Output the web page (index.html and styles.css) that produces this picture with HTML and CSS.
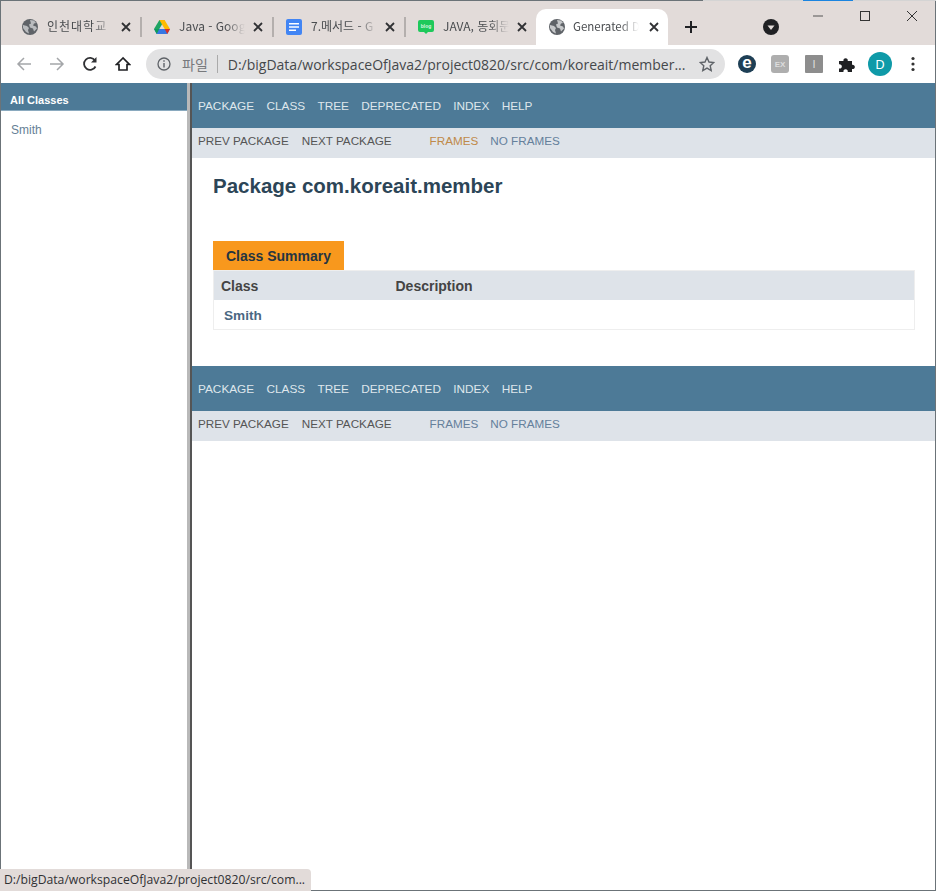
FILE: index.html
```html
<!DOCTYPE html>
<html lang="ko">
<head>
    <meta charset="UTF-8">
    <meta name="viewport" content="width=device-width, initial-scale=1.0">
    <title>Generated Documentation</title>
    <link rel="stylesheet" href="styles.css">
</head>
<body>
    <div class="window">
        <div class="titlebar">
            <span class="edge-light"></span>
            <span class="edge-blue"></span>
            <div class="tab">
                <svg class="favicon" viewBox="0 0 16 16"><circle cx="8" cy="8" r="8" fill="#5f6368"/><path d="M1 6l4 1 2 2-1 2 1 3.500-3-1.500-3-4zM8 1l4 .5 2 2.500-2 .5-1 2 3 1 1 2-3 3-1-3-3-1-1-3 2-1z" fill="#b9bbbe"/></svg>
                <span class="tab-title tab-title-ko">인천대학교</span>
                <svg class="tab-close" viewBox="0 0 10 10"><path d="M1 1l8 8M9 1l-8 8" stroke="#303134" stroke-width="1.800"/></svg>
            </div>
            <div class="tab">
                <svg class="favicon" viewBox="0 0 16 16"><path d="M5.400 1h5.200L5.300 10H0z" fill="#1fa463"/><path d="M10.600 1L16 10h-5.300L5.400 1z" fill="#ffba00"/><path d="M0 10l2.700 5h10.600l2.700-5z" fill="#3777e3"/><path d="M0 10h5.300l-2.600 5z" fill="#0f9d58"/><path d="M16 10h-5.300l2.600 5z" fill="#d93025"/></svg>
                <span class="tab-title">Java - Goog</span>
                <svg class="tab-close" viewBox="0 0 10 10"><path d="M1 1l8 8M9 1l-8 8" stroke="#303134" stroke-width="1.800"/></svg>
            </div>
            <div class="tab">
                <svg class="favicon" viewBox="0 0 16 16"><rect width="16" height="16" rx="2" fill="#4285f4"/><path d="M3 4h10v1.600H3zM3 7.200h10v1.600H3zM3 10.400h7V12H3z" fill="#fff"/></svg>
                <span class="tab-title">7.메서드 - G</span>
                <svg class="tab-close" viewBox="0 0 10 10"><path d="M1 1l8 8M9 1l-8 8" stroke="#303134" stroke-width="1.800"/></svg>
            </div>
            <div class="tab">
                <svg class="favicon" viewBox="0 0 16 16"><path d="M2 1h12a2 2 0 0 1 2 2v8a2 2 0 0 1-2 2h-4l-2 2-2-2H2a2 2 0 0 1-2-2V3a2 2 0 0 1 2-2z" fill="#1ec95b"/><text x="8" y="9" class="blog-label">blog</text></svg>
                <span class="tab-title">JAVA, 동회문</span>
                <svg class="tab-close" viewBox="0 0 10 10"><path d="M1 1l8 8M9 1l-8 8" stroke="#303134" stroke-width="1.800"/></svg>
            </div>
            <div class="tab tab-active">
                <svg class="favicon" viewBox="0 0 16 16"><circle cx="8" cy="8" r="8" fill="#5f6368"/><path d="M1 6l4 1 2 2-1 2 1 3.500-3-1.500-3-4zM8 1l4 .5 2 2.500-2 .5-1 2 3 1 1 2-3 3-1-3-3-1-1-3 2-1z" fill="#c6c8ca"/></svg>
                <span class="tab-title">Generated D</span>
                <svg class="tab-close" viewBox="0 0 10 10"><path d="M1 1l8 8M9 1l-8 8" stroke="#303134" stroke-width="1.800"/></svg>
            </div>
            <svg class="new-tab" viewBox="0 0 14 14"><path d="M7 1v12M1 7h12" stroke="#202124" stroke-width="2"/></svg>
            <svg class="tab-search" viewBox="0 0 16 16"><circle cx="8" cy="8" r="8" fill="#202124"/><path d="M4.500 6.500h7L8 11z" fill="#e2dbd9"/></svg>
            <div class="win-controls">
                <svg viewBox="0 0 12 12"><path d="M1 6h10" stroke="#555" stroke-width="1"/></svg>
                <svg viewBox="0 0 12 12"><rect x="1.500" y="1.500" width="9" height="9" fill="none" stroke="#333" stroke-width="1"/></svg>
                <svg viewBox="0 0 12 12"><path d="M1 1l10 10M11 1L1 11" stroke="#333" stroke-width="1"/></svg>
            </div>
        </div>

        <div class="toolbar">
            <svg class="tool-icon" viewBox="0 0 16 16"><path d="M15 8H2M8 2L2 8l6 6" fill="none" stroke="#a4a6a9" stroke-width="1.500"/></svg>
            <svg class="tool-icon" viewBox="0 0 16 16"><path d="M1 8h13M8 2l6 6-6 6" fill="none" stroke="#a4a6a9" stroke-width="1.500"/></svg>
            <svg class="tool-icon" viewBox="0 0 16 16"><path d="M13.500 10.500A6 6 0 1 1 13 4.500" fill="none" stroke="#303134" stroke-width="1.800"/><path d="M14.500 1v5.500H9z" fill="#303134"/></svg>
            <svg class="tool-icon" viewBox="0 0 16 16"><path d="M8 2L1.500 8.500H4V14h8V8.500h2.500z" fill="none" stroke="#202124" stroke-width="1.700"/></svg>
            <div class="omnibox">
                <svg class="info-icon" viewBox="0 0 14 14"><circle cx="7" cy="7" r="6" fill="none" stroke="#5f6368" stroke-width="1.300"/><path d="M7 6v4.500M7 3.300v1.500" stroke="#5f6368" stroke-width="1.400"/></svg>
                <span class="scheme">파일</span>
                <span class="omni-sep"></span>
                <span class="url">D:/bigData/workspaceOfJava2/project0820/src/com/koreait/member...</span>
                <svg class="star" viewBox="0 0 16 16"><path d="M8 1.500l2 4.500 4.800.5-3.600 3.200 1 4.800L8 12.100l-4.200 2.400 1-4.800L1.200 6.500 6 6z" fill="none" stroke="#5f6368" stroke-width="1.400"/></svg>
            </div>
            <div class="extensions">
                <span class="ext ext-e">e</span>
                <span class="ext ext-ex">EX</span>
                <span class="ext ext-i">I</span>
                <svg class="ext ext-puzzle" viewBox="0 0 18 18"><path d="M1 6h4.500a2.200 2.200 0 1 1 4.200 0H14v3.800a2.200 2.200 0 1 1 0 4.200V17H9.700a2.200 2.200 0 1 0-4.200 0H1v-3.500a2.200 2.200 0 1 0 0-4.200z" fill="#202124"/></svg>
                <span class="avatar">D</span>
                <svg class="menu-dots" viewBox="0 0 4 16"><circle cx="2" cy="2.500" r="1.600" fill="#333"/><circle cx="2" cy="8" r="1.600" fill="#333"/><circle cx="2" cy="13.500" r="1.600" fill="#333"/></svg>
            </div>
        </div>

        <div class="frames">
            <div class="left-frame">
                <div class="left-head">All Classes</div>
                <a class="left-link">Smith</a>
            </div>
            <div class="divider"></div>
            <div class="main-frame">
                <div class="topnav">
                    <span>PACKAGE</span><span>CLASS</span><span>TREE</span><span>DEPRECATED</span><span>INDEX</span><span>HELP</span>
                </div>
                <div class="subnav">
                    <span class="sub-plain">PREV PACKAGE</span>
                    <span class="sub-plain">NEXT PACKAGE</span>
                    <span class="sub-frames sub-hover">FRAMES</span>
                    <span class="sub-noframes">NO FRAMES</span>
                </div>
                <h1 class="title">Package com.koreait.member</h1>
                <div class="summary">
                    <div class="caption">Class Summary</div>
                    <table>
                        <thead>
                            <tr><th class="col-class">Class</th><th>Description</th></tr>
                        </thead>
                        <tbody>
                            <tr><td><a>Smith</a></td><td></td></tr>
                        </tbody>
                    </table>
                </div>
                <div class="topnav">
                    <span>PACKAGE</span><span>CLASS</span><span>TREE</span><span>DEPRECATED</span><span>INDEX</span><span>HELP</span>
                </div>
                <div class="subnav">
                    <span class="sub-plain">PREV PACKAGE</span>
                    <span class="sub-plain">NEXT PACKAGE</span>
                    <span class="sub-frames">FRAMES</span>
                    <span class="sub-noframes">NO FRAMES</span>
                </div>
            </div>
        </div>

        <div class="status">D:/bigData/workspaceOfJava2/project0820/src/com...</div>
    </div>
</body>
</html>
```

FILE: styles.css
```css
html, body {
    margin: 0;
    height: 100%;
}
body {
    font-family: "Liberation Sans", Arial, sans-serif;
    overflow: hidden;
}
.window {
    position: relative;
    height: 891px;
    box-sizing: border-box;
    display: flex;
    flex-direction: column;
    border: 1px solid #6b7378;
    background: #fff;
}

/* tabs */
.titlebar {
    height: 44px;
    flex: none;
    background: #e2dbd9;
    display: flex;
    align-items: flex-end;
    padding-left: 7px;
    position: relative;
}
/* what shows of the window behind, along the top edge */
.edge-light, .edge-blue {
    position: absolute;
    top: -1px;
    height: 1px;
}
.edge-light {
    left: 702px;
    right: -1px;
    background: #d4d4d4;
}
.edge-blue {
    left: 802px;
    width: 50px;
    background: #1a84e0;
}
.tab {
    width: 132px;
    height: 36px;
    box-sizing: border-box;
    display: flex;
    align-items: center;
    padding: 0 9px 0 14px;
    position: relative;
    color: #4a4d50;
}
.tab:not(.tab-active)::after {
    content: "";
    position: absolute;
    right: -2px;
    top: 8px;
    height: 20px;
    width: 2px;
    background: #b4afad;
}
.tab:nth-child(6)::after {
    display: none;
}
.tab-active {
    background: #fff;
    border-radius: 10px 10px 0 0;
    padding-left: 13px;
}
.favicon {
    width: 16px;
    height: 16px;
    flex: none;
}
.blog-label {
    font: bold 5px "Liberation Sans", sans-serif;
    fill: #d9f7e2;
    text-anchor: middle;
}
.tab-title {
    font: 12px/16px "Noto Sans CJK KR", "Noto Sans", sans-serif;
    margin: -2px 0 0 9px;
    width: 66px;
    white-space: nowrap;
    overflow: hidden;
    -webkit-mask-image: linear-gradient(to right, #000 70%, transparent);
    mask-image: linear-gradient(to right, #000 70%, transparent);
}
.tab-title-ko {
    letter-spacing: 1px;
}
.tab-active .tab-title {
    font-size: 11.5px;
    margin-left: 8px;
}
.tab-close {
    margin-left: auto;
    width: 10px;
    height: 10px;
    flex: none;
}
.new-tab {
    width: 14px;
    height: 14px;
    margin: 0 0 11px 16px;
}
.tab-search {
    width: 16px;
    height: 16px;
    margin: 0 0 10px 65px;
}
.win-controls {
    position: absolute;
    right: 17px;
    top: 9px;
    display: flex;
    gap: 35px;
}
.win-controls svg {
    width: 12px;
    height: 12px;
}

/* address bar */
.toolbar {
    height: 38px;
    flex: none;
    box-sizing: border-box;
    display: flex;
    align-items: center;
    padding-left: 15px;
    background: #fff;
}
.tool-icon {
    width: 16px;
    height: 16px;
    margin-right: 17px;
}
.omnibox {
    width: 579px;
    height: 30px;
    margin-left: -2px;
    box-sizing: border-box;
    border-radius: 15px;
    background: #e2e2e3;
    display: flex;
    align-items: center;
    padding: 0 10px 0 11px;
}
.info-icon {
    width: 14px;
    height: 14px;
}
.scheme {
    font: 14px "Noto Sans CJK KR", sans-serif;
    color: #77797c;
    margin-left: 11px;
}
.omni-sep {
    width: 1px;
    height: 18px;
    background: #aaa;
    margin: 0 10px 0 9px;
}
.url {
    font: 14px "Open Sans", sans-serif;
    color: #45484b;
    white-space: nowrap;
}
.star {
    width: 16px;
    height: 16px;
    margin-left: auto;
}
.extensions {
    display: flex;
    align-items: center;
    margin-left: 13px;
}
.ext {
    width: 18px;
    height: 18px;
    margin-right: 15px;
    flex: none;
}
.ext-e {
    box-sizing: border-box;
    border-radius: 50%;
    background: #1e3f55;
    color: #fff;
    font: bold 17px/16px "Liberation Sans", sans-serif;
    text-align: center;
}
.ext-ex, .ext-i {
    display: flex;
    align-items: center;
    justify-content: center;
    color: #ddd;
    font: bold 8px "Liberation Sans", sans-serif;
    border-radius: 3px;
    background: #aeaeae;
}
.ext-ex {
    margin-right: 16px;
}
.ext-i {
    background: #8d8d8d;
    border-radius: 1px;
    font-weight: normal;
    font-size: 11px;
}
.avatar {
    width: 24px;
    height: 24px;
    margin: 0 19px 0 -3px;
    border-radius: 50%;
    background: #0f9aa8;
    color: #fff;
    font: 13px "Noto Sans", sans-serif;
    display: flex;
    align-items: center;
    justify-content: center;
}
.menu-dots {
    width: 4px;
    height: 16px;
}

/* frames */
.frames {
    flex: 1;
    display: flex;
    min-height: 0;
}
.left-frame {
    width: 186px;
    flex: none;
    background: #fff;
}
.left-head {
    height: 28px;
    box-sizing: border-box;
    padding-left: 9px;
    background: #4d7a97;
    color: #fff;
    font-size: 11px;
    font-weight: bold;
    border-bottom: 1px solid #8aaabf;
    line-height: 35px;
}
.left-link {
    display: block;
    margin: 12px 0 0 10px;
    font-size: 12px;
    color: #667f96;
}
.divider {
    width: 5px;
    flex: none;
    box-sizing: border-box;
    background: #b9b9b9;
    border-right: 2px solid #555;
}
.main-frame {
    flex: 1;
    min-width: 0;
}
.topnav {
    height: 45px;
    box-sizing: border-box;
    background: #4d7a97;
    color: #dfe7ec;
    font-size: 11.8px;
    display: flex;
    align-items: center;
    padding-left: 6px;
    gap: 12.3px;
}
.subnav {
    height: 30px;
    box-sizing: border-box;
    background: #dee3e9;
    font-size: 11.7px;
    display: flex;
    align-items: center;
    padding: 0 0 6px 6px;
}
.sub-plain {
    color: #555;
    margin-right: 13px;
}
.sub-frames {
    color: #65809b;
    margin-left: 25px;
}
.sub-hover {
    color: #c08a4a;
}
.sub-noframes {
    color: #65809b;
    margin-left: 12px;
}
.title {
    margin: 16px 0 0 21px;
    font-size: 20.5px;
    line-height: 24px;
    color: #2c4557;
}
.summary {
    margin: 43px 20px 36px 21px;
}
.caption {
    width: 131px;
    height: 29px;
    box-sizing: border-box;
    background: #f8981d;
    color: #253441;
    font-size: 14px;
    font-weight: bold;
    line-height: 30px;
    text-align: center;
}
table {
    width: 100%;
    border-collapse: collapse;
    border: 1px solid #eee;
}
th, td {
    height: 30px;
    padding: 2px 7px 0;
    text-align: left;
    font-size: 14px;
    box-sizing: border-box;
}
th {
    height: 29px;
    background-color: #dee3e9;
    color: #444;
    font-weight: bold;
}
.col-class {
    width: 175px;
}
td {
    font-weight: bold;
    font-size: 13.6px;
    color: #4a6782;
    padding-left: 10px;
}

/* link preview bubble */
.status {
    position: absolute;
    left: -1px;
    bottom: -1px;
    width: 311px;
    height: 22px;
    box-sizing: border-box;
    padding-left: 4px;
    background: #e2dbd9;
    border-radius: 0 4px 0 0;
    color: #303134;
    font: 12.2px/22px "Open Sans", sans-serif;
    white-space: nowrap;
}
```
